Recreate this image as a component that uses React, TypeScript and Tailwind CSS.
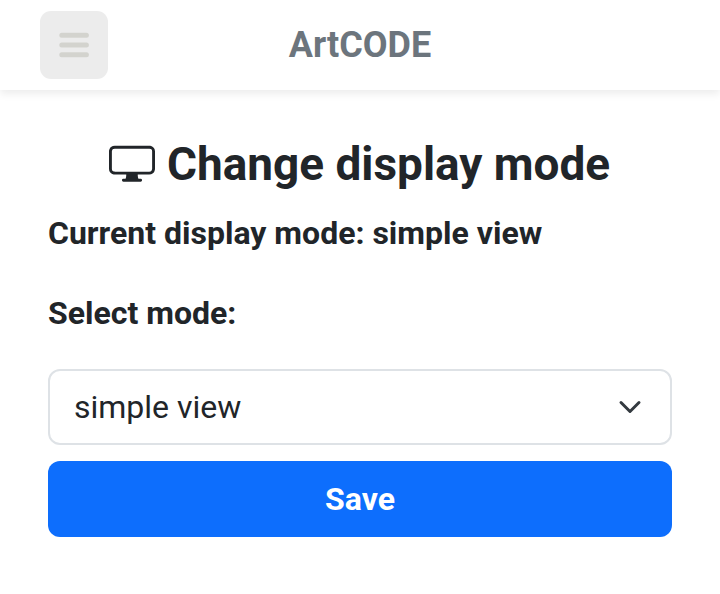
import React from "react";

function Monitor() {
  return (
    <svg className="mb-[2px] h-[46px] w-[46px] shrink-0 overflow-visible" viewBox="0 0 16 16" fill="currentColor" aria-hidden="true">
      <path d="M0 4s0-2 2-2h12s2 0 2 2v6s0 2-2 2h-4c0 .667.083 1.167.25 1.5H11a.5.5 0 0 1 0 1H5a.5.5 0 0 1 0-1h.75c.167-.333.25-.833.25-1.5H2s-2 0-2-2V4zm1.398-.855a.758.758 0 0 0-.254.302A1.46 1.46 0 0 0 1 4.01V10c0 .325.078.502.145.602.07.105.17.188.302.254a1.464 1.464 0 0 0 .538.143L2.01 11H14c.325 0 .502-.078.602-.145a.758.758 0 0 0 .254-.302 1.464 1.464 0 0 0 .143-.538L15 9.99V4c0-.325-.078-.502-.145-.602a.757.757 0 0 0-.302-.254A1.46 1.46 0 0 0 13.99 3H2c-.325 0-.502.078-.602.145z" />
    </svg>
  );
}

export default function App() {
  return (
    <div className="flex h-[594px] w-[720px] flex-col overflow-hidden bg-white font-[Roboto,sans-serif] text-[#212529]">
      <header className="grid h-[90px] shrink-0 grid-cols-[68px_1fr_68px] items-center px-10 shadow-[0_4px_8px_rgba(0,0,0,0.075)]">
        <button aria-label="Menu" className="flex h-[68px] w-[68px] items-center justify-center rounded-[11px] bg-[#ececec]">
          <svg className="h-8 w-8" viewBox="0 0 32 32" fill="none" stroke="#d3d3ce" strokeWidth="5" strokeLinecap="round" aria-hidden="true">
            <path d="M3.8 6.2h24.6M3.8 16h24.6M3.8 25.8h24.6" />
          </svg>
        </button>
        <div className="text-center text-[36px] leading-[48px] font-bold text-[#6c757d]">ArtCODE</div>
      </header>
      <main className="flex flex-col px-12 pt-[46px]">
        <h1 className="flex h-[56px] items-center justify-center gap-[12px] pr-[0.8px] text-[45.92px] leading-[56px] font-bold whitespace-nowrap">
          <Monitor />
          <span>Change display mode</span>
        </h1>
        <p className="mt-[17px] text-[32px] leading-[48px] font-bold">Current display mode: simple view</p>
        <label className="mt-8 text-[32px] leading-[48px] font-bold">Select mode:</label>
        <button className="mt-8 flex h-[76px] items-center justify-between rounded-xl border-2 border-[#dee2e6] pr-[28px] pl-6 text-[32px]">
          <span>simple view</span>
          <svg className="h-6 w-6" viewBox="0 0 16 16" fill="none" stroke="#343a40" strokeWidth="2" strokeLinecap="round" strokeLinejoin="round" aria-hidden="true">
            <path d="m2 5 6 6 6-6" />
          </svg>
        </button>
        <button className="mt-4 h-[76px] rounded-xl bg-[#0d6efd] text-[32px] font-bold text-white">Save</button>
      </main>
    </div>
  );
}
